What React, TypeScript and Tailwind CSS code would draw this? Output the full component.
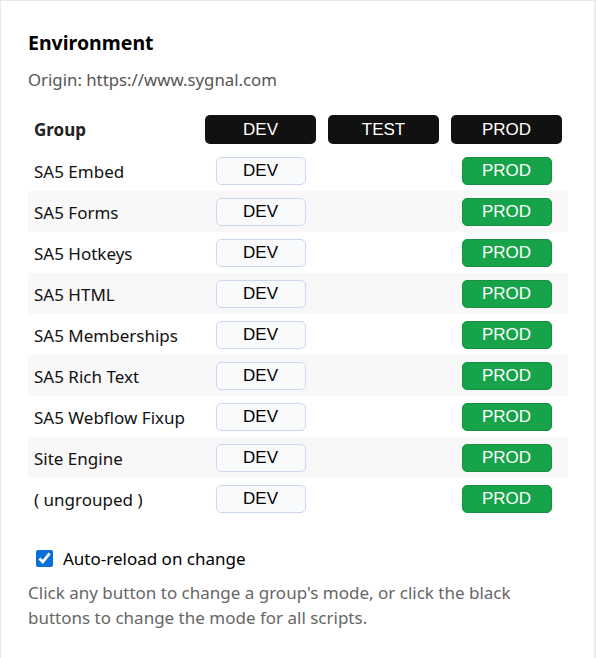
import React, { useState } from 'react'

const groups = [
  'SA5 Embed',
  'SA5 Forms',
  'SA5 Hotkeys',
  'SA5 HTML',
  'SA5 Memberships',
  'SA5 Rich Text',
  'SA5 Webflow Fixup',
  'Site Engine',
  '( ungrouped )',
]

const btnFont = { fontFamily: '"Liberation Sans", Arial, sans-serif' }

function HeaderButton({ label }: { label: string }) {
  return (
    <button
      style={btnFont}
      className="w-full h-[29px] rounded-[5px] bg-[#111111] text-white text-[17px] font-normal leading-none"
    >
      {label}
    </button>
  )
}

export default function App() {
  const [autoReload, setAutoReload] = useState(true)

  return (
    <div
      className="w-[596px] h-[658px] bg-white border-t border-l border-[#e8e8ee] border-r-2 border-r-[#ececec] overflow-hidden"
      style={{ fontFamily: '"Noto Sans", "Open Sans", sans-serif' }}
    >
      <div className="pl-[27px] pr-[26px] pt-[28px]">
        <h1 className="text-[19.5px] leading-[28px] font-bold text-black">Environment</h1>
        <p className="mt-[11px] text-[16.8px] leading-[24px] text-[#555]">Origin: https://www.sygnal.com</p>

        <table className="mt-[17px] w-[540px] table-fixed border-collapse">
          <colgroup>
            <col className="w-[171px]" />
            <col className="w-[123px]" />
            <col className="w-[123px]" />
            <col className="w-[123px]" />
          </colgroup>
          <thead>
            <tr className="h-[41px]">
              <th className="px-[6px] text-left text-[17px] font-bold text-[#222]">Group</th>
              <th className="px-[6px]"><HeaderButton label="DEV" /></th>
              <th className="px-[6px]"><HeaderButton label="TEST" /></th>
              <th className="px-[6px]"><HeaderButton label="PROD" /></th>
            </tr>
          </thead>
          <tbody>
            {groups.map((g, i) => (
              <tr key={g} className={`h-[41px] ${i % 2 === 1 ? 'bg-[#f8f8f8]' : 'bg-white'}`}>
                <td className="px-[6px] pt-[2px] text-[17px] text-[#111] whitespace-nowrap">{g}</td>
                <td className="text-center">
                  <button
                    style={btnFont}
                    className="w-[90px] h-[28px] rounded-[5px] bg-[#f8fafc] border border-[#cdd6f4] text-black text-[17px] leading-none"
                  >
                    DEV
                  </button>
                </td>
                <td />
                <td className="text-center">
                  <button
                    style={btnFont}
                    className="w-[90px] h-[28px] rounded-[5px] bg-[#16a34a] border border-[#15913f] text-white text-[17px] leading-none"
                  >
                    PROD
                  </button>
                </td>
              </tr>
            ))}
          </tbody>
        </table>

        <label className="mt-[27px] ml-[8px] flex items-center gap-[10px] text-[17px] text-black">
          <input
            type="checkbox"
            checked={autoReload}
            onChange={(e) => setAutoReload(e.target.checked)}
            className="w-[17px] h-[17px] accent-[#0b6fd8]"
          />
          Auto-reload on change
        </label>

        <p className="mt-[8px] max-w-[525px] text-[17px] leading-[25px] text-[#666]">
          Click any button to change a group's mode, or click the black buttons to change the mode for all scripts.
        </p>
      </div>
    </div>
  )
}
